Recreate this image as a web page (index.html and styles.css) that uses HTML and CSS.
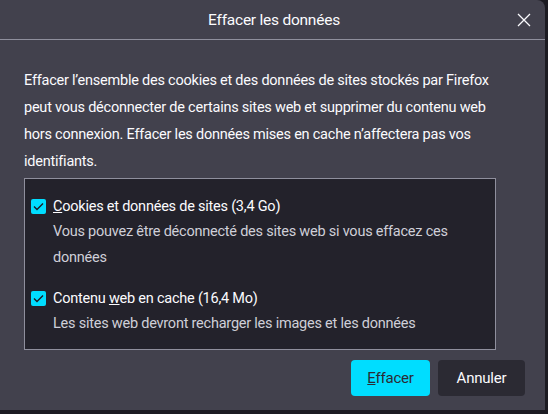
FILE: index.html
```html
<!DOCTYPE html>
<html lang="fr">
<head>
<meta charset="utf-8">
<link rel="stylesheet" href="styles.css">
</head>
<body>
<div class="dialog">
  <div class="header">
    <div class="title">Effacer les données</div>
    <svg class="close" width="14" height="14" viewBox="0 0 14 14"><path d="M1 1 L13 13 M13 1 L1 13" stroke="#fbfbfe" stroke-width="1.3" fill="none"/></svg>
  </div>
  <div class="body">
    <p class="intro">Effacer l’ensemble des cookies et des données de sites stockés par Firefox peut vous déconnecter de certains sites web et supprimer du contenu web hors connexion. Effacer les données mises en cache n’affectera pas vos identifiants.</p>
    <div class="box">
      <div class="option">
        <div class="row">
          <span class="check"><svg width="15" height="15" viewBox="0 0 15 15"><path d="M3 7.5 L6 10.5 L12 4.5" stroke="#1c1b22" stroke-width="1.4" fill="none"/></svg></span>
          <span class="label"><u>C</u>ookies et données de sites (3,4 Go)</span>
        </div>
        <div class="desc">Vous pouvez être déconnecté des sites web si vous effacez ces données</div>
      </div>
      <div class="option">
        <div class="row">
          <span class="check"><svg width="15" height="15" viewBox="0 0 15 15"><path d="M3 7.5 L6 10.5 L12 4.5" stroke="#1c1b22" stroke-width="1.4" fill="none"/></svg></span>
          <span class="label">Contenu <u>w</u>eb en cache (16,4 Mo)</span>
        </div>
        <div class="desc">Les sites web devront recharger les images et les données</div>
      </div>
    </div>
    <div class="buttons">
      <button class="btn primary"><u>E</u>ffacer</button>
      <button class="btn secondary">Annuler</button>
    </div>
  </div>
</div>
</body>
</html>
```
FILE: styles.css
```css
html, body {
  margin: 0;
  padding: 0;
  background: #1c1b22;
  width: 548px;
  height: 414px;
  overflow: hidden;
}
body {
  font-family: Roboto, "Noto Sans", sans-serif;
  color: #fbfbfe;
  font-size: 14.5px;
  letter-spacing: -0.23px;
}
.dialog {
  width: 545px;
  height: 410px;
  background: #42414d;
  border-top-right-radius: 8px;
  box-sizing: border-box;
}
.header {
  height: 39px;
  border-bottom: 1px solid #8f8f9d;
  display: flex;
  align-items: center;
  justify-content: center;
  position: relative;
}
.title {
  font-size: 15.5px;
  margin-left: 3px;
}
.close {
  position: absolute;
  right: 14px;
  top: 13px;
}
.body {
  padding: 0 20px 0 24px;
}
.intro {
  margin: 0;
  padding-top: 27px;
  line-height: 27px;
  width: 470px;
}
.box {
  margin-top: 3px;
  width: 472px;
  height: 172px;
  box-sizing: border-box;
  border: 1px solid #8f8f9d;
  background: #23222b;
  padding: 14px 6px 0 6px;
}
.option + .option {
  margin-top: 14px;
}
.row {
  display: flex;
  align-items: center;
  gap: 7px;
  height: 26px;
}
.check {
  width: 15px;
  height: 15px;
  background: #00ddff;
  border-radius: 2px;
  display: inline-flex;
}
.desc {
  color: #cfcfd8;
  padding-left: 22px;
  line-height: 26px;
  width: 420px;
}
.buttons {
  display: flex;
  justify-content: flex-end;
  gap: 8px;
  margin-top: 10px;
  width: 501px;
}
.btn {
  height: 36px;
  border: none;
  border-radius: 4px;
  font-family: inherit;
  font-size: 15px;
  letter-spacing: -0.2px;
  padding: 0;
}
.primary {
  width: 79px;
  background: #00ddff;
  color: #2b2a33;
}
.secondary {
  width: 87px;
  background: #2b2a33;
  color: #fbfbfe;
}
```
